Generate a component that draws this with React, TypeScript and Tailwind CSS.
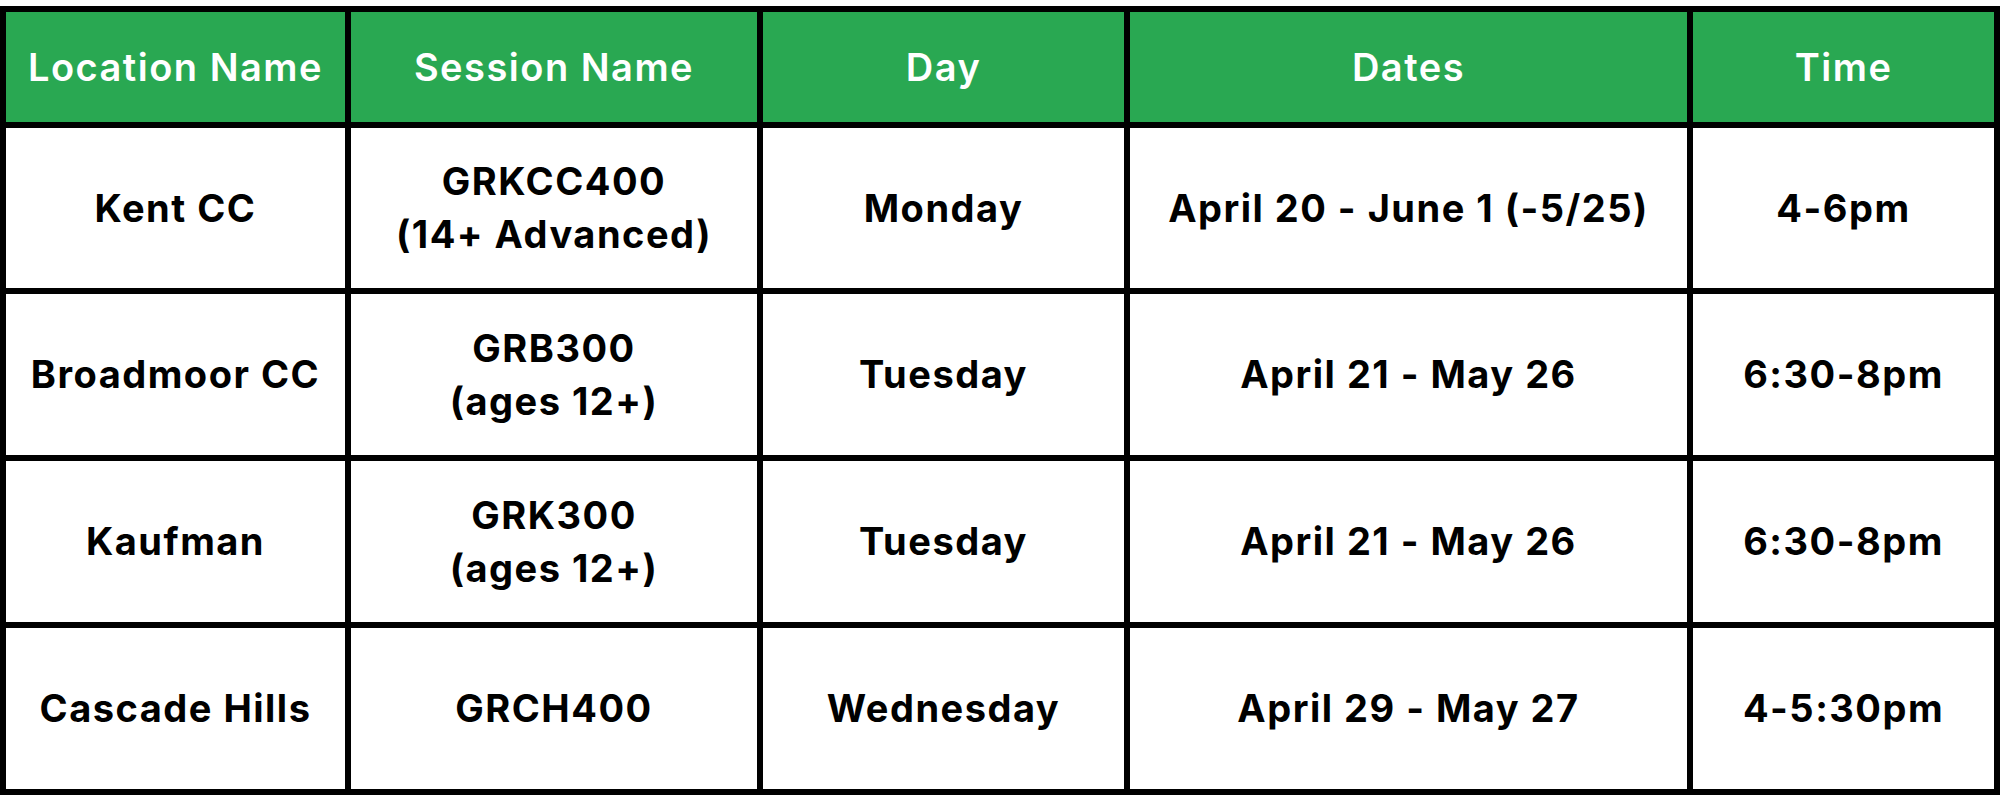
import React from "react";

const headers = ["Location Name", "Session Name", "Day", "Dates", "Time"];

const rows: string[][][] = [
  [["Kent CC"], ["GRKCC400", "(14+ Advanced)"], ["Monday"], ["April 20 - June 1 (-5/25)"], ["4-6pm"]],
  [["Broadmoor CC"], ["GRB300", "(ages 12+)"], ["Tuesday"], ["April 21 - May 26"], ["6:30-8pm"]],
  [["Kaufman"], ["GRK300", "(ages 12+)"], ["Tuesday"], ["April 21 - May 26"], ["6:30-8pm"]],
  [["Cascade Hills"], ["GRCH400"], ["Wednesday"], ["April 29 - May 27"], ["4-5:30pm"]],
];

export default function App() {
  return (
    <div
      className="w-[2000px] h-[807px] bg-white pt-[6px]"
      style={{ fontFamily: "Inter, 'Noto Sans', sans-serif" }}
    >
      <div className="grid grid-cols-[339px_406px_361px_557px_301px] grid-rows-[110px_160px_161px_161px_161px] gap-[6px] bg-black p-[6px] w-[2000px]">
        {headers.map((h) => (
          <div
            key={h}
            className="bg-[#29a852] flex items-center justify-center text-white font-semibold text-[38px] tracking-[1.5px]"
          >
            {h}
          </div>
        ))}
        {rows.map((r, i) =>
          r.map((cell, j) => (
            <div
              key={`${i}-${j}`}
              className="bg-white flex flex-col items-center justify-center text-black font-bold text-[38px] leading-[53px] tracking-[1.5px] text-center"
            >
              {cell.map((line, k) => (
                <span key={k}>{line}</span>
              ))}
            </div>
          ))
        )}
      </div>
    </div>
  );
}
